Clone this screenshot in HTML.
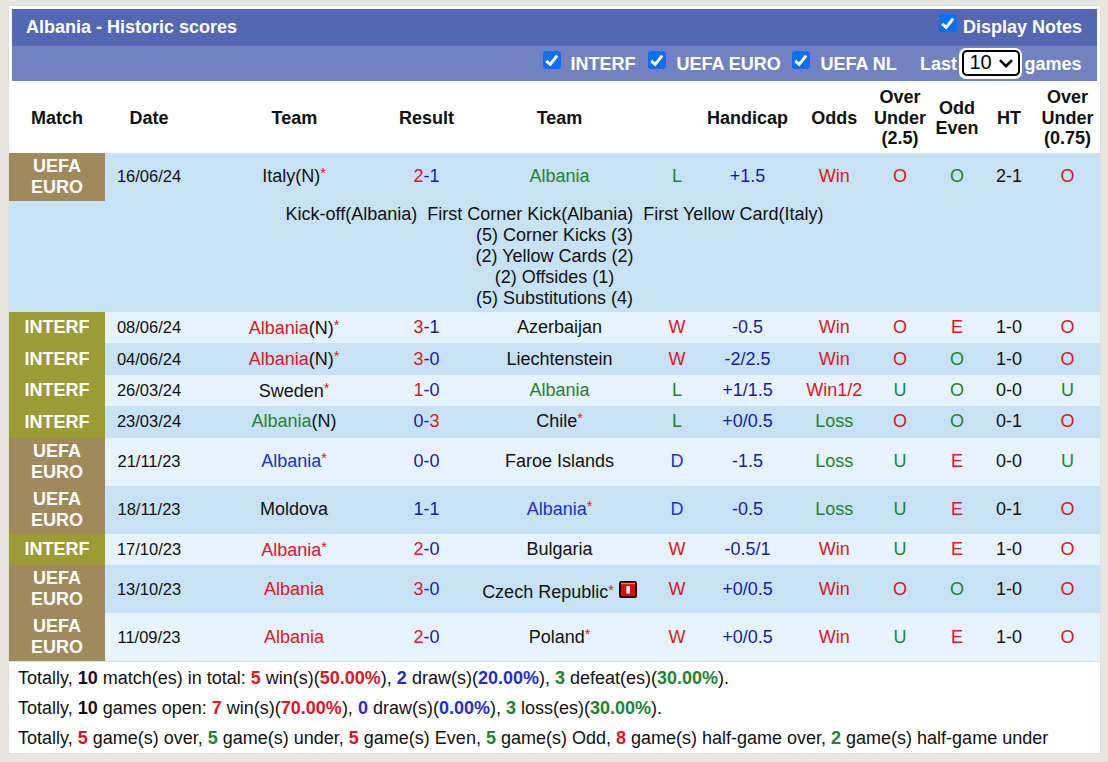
<!DOCTYPE html><html><head><meta charset="utf-8"><style>
*{margin:0;padding:0;box-sizing:border-box}
html,body{width:1108px;height:762px;overflow:hidden;background:#e8e7df;font-family:"Liberation Sans",sans-serif;color:#111111;font-size:18px}
.a{position:absolute}
#wrap{position:absolute;left:8px;top:5px;width:1093px;height:749px;background:#fff;border:1px solid #dedfd6}
#title{position:absolute;left:12px;top:9px;width:1085px;height:37px;background:#5367b4;color:#fff;font-weight:bold}
#filt{position:absolute;left:12px;top:46px;width:1085px;height:35px;background:#7282c0;color:#fff;font-weight:bold}
.row{position:absolute;left:9px;width:1091px}
.light{background:#e6f3fc} .medium{background:#c8e2f5}
.mc{position:absolute;left:0;top:0;width:96px;height:100%;color:#fff;font-weight:bold;display:flex;align-items:center;justify-content:center;text-align:center;line-height:21px}
.euro .mc, .mc.euro{background:#a08a5c} .mc.interf{background:#9c9c36}
.c{position:absolute;top:0;height:100%;width:240px;margin-left:-120px;display:flex;align-items:center;justify-content:center;white-space:nowrap}
.r{color:#dd1524} .g{color:#1e8232} .b{color:#1a1c9c} .bb{color:#1f2ed0}
.dt{font-size:16.5px} .st{font-size:14.5px;vertical-align:3.5px}
.hd{position:absolute;top:82px;height:72px;font-weight:bold;width:120px;margin-left:-60px;text-align:center;display:flex;align-items:center;justify-content:center;line-height:20.5px}
.note{position:absolute;left:9px;top:201px;width:1091px;height:111px;background:#c8e2f5;text-align:center;line-height:21px;padding-top:3px}
.rc{display:inline-block;vertical-align:0;margin-left:0}
.sum{position:absolute;left:18px;white-space:nowrap;line-height:20px}
.sum b{font-weight:bold}
</style></head><body>
<div id="wrap"></div>
<div id="title"><div class="a" style="left:14px;top:8px">Albania - Historic scores</div><svg class="a" width="18" height="18" style="left:927px;top:5px" viewBox="0 0 18 18"><rect x="0" y="0" width="18" height="18" rx="3" fill="#0b6ff5"/><path d="M3.2 9.8 L7.2 13.4 L14.2 4.6" fill="none" stroke="#fff" stroke-width="3"/></svg><div class="a" style="left:951px;top:8px">Display Notes</div></div>
<div id="filt"><svg class="a" width="18" height="18" style="left:531px;top:4.5px" viewBox="0 0 18 18"><rect x="0" y="0" width="18" height="18" rx="3" fill="#0b6ff5"/><path d="M3.2 9.8 L7.2 13.4 L14.2 4.6" fill="none" stroke="#fff" stroke-width="3"/></svg><div class="a" style="left:558.5px;top:8px">INTERF</div><svg class="a" width="18" height="18" style="left:636px;top:4.5px" viewBox="0 0 18 18"><rect x="0" y="0" width="18" height="18" rx="3" fill="#0b6ff5"/><path d="M3.2 9.8 L7.2 13.4 L14.2 4.6" fill="none" stroke="#fff" stroke-width="3"/></svg><div class="a" style="left:664.5px;top:8px">UEFA EURO</div><svg class="a" width="18" height="18" style="left:780px;top:5px" viewBox="0 0 18 18"><rect x="0" y="0" width="18" height="18" rx="3" fill="#0b6ff5"/><path d="M3.2 9.8 L7.2 13.4 L14.2 4.6" fill="none" stroke="#fff" stroke-width="3"/></svg><div class="a" style="left:808.5px;top:8px">UEFA NL</div><div class="a" style="left:908px;top:8px">Last</div><div class="a" style="left:1012.5px;top:8px">games</div><div class="a" style="left:947px;top:1.5px;width:63px;height:31px;background:#fff;border-radius:7px"></div><div class="a" style="left:950px;top:3.7px;width:58px;height:26px;background:#fff;border:2.6px solid #000;border-radius:5px"></div><div class="a" style="left:957.5px;top:5px;font-weight:normal;color:#000;font-size:20px">10</div><svg class="a" style="left:987px;top:13px" width="14" height="9" viewBox="0 0 14 9"><path d="M1 1.2 L7 7.2 L13 1.2" fill="none" stroke="#000" stroke-width="2.6"/></svg></div>
<div class="hd" style="left:57px">Match</div>
<div class="hd" style="left:149px">Date</div>
<div class="hd" style="left:294.4px">Team</div>
<div class="hd" style="left:426.5px">Result</div>
<div class="hd" style="left:559.5px">Team</div>
<div class="hd" style="left:747.5px">Handicap</div>
<div class="hd" style="left:834.3px">Odds</div>
<div class="hd" style="left:900px">Over<br>Under<br>(2.5)</div>
<div class="hd" style="left:957px">Odd<br>Even</div>
<div class="hd" style="left:1009px">HT</div>
<div class="hd" style="left:1067.5px">Over<br>Under<br>(0.75)</div>
<div class="row medium" style="top:153px;height:48px"><div class="mc euro">UEFA<br>EURO</div>
<div class="c" style="left:140px;top:-1px"><span><span class="dt">16/06/24</span></span></div>
<div class="c" style="left:285px;top:-1px"><span>Italy(N)<span class="r st">*</span></span></div>
<div class="c" style="left:417.5px;top:-1px"><span><span class="r">2</span><span class="b">-1</span></span></div>
<div class="c" style="left:550.5px;top:-1px"><span><span class="g">Albania</span></span></div>
<div class="c" style="left:668px;top:-1px"><span><span class="g">L</span></span></div>
<div class="c" style="left:738.5px;top:-1px"><span><span class="b">+1.5</span></span></div>
<div class="c" style="left:825.3px;top:-1px"><span><span class="r">Win</span></span></div>
<div class="c" style="left:891px;top:-1px"><span><span class="r">O</span></span></div>
<div class="c" style="left:948px;top:-1px"><span><span class="g">O</span></span></div>
<div class="c" style="left:1000px;top:-1px"><span>2-1</span></div>
<div class="c" style="left:1058.5px;top:-1px"><span><span class="r">O</span></span></div>
</div>
<div class="note">Kick-off(Albania)&nbsp;&nbsp;First Corner Kick(Albania)&nbsp;&nbsp;First Yellow Card(Italy)<br>(5) Corner Kicks (3)<br>(2) Yellow Cards (2)<br>(2) Offsides (1)<br>(5) Substitutions (4)</div>
<div class="row light" style="top:312px;height:31px"><div class="mc interf">INTERF</div>
<div class="c" style="left:140px;top:0px"><span><span class="dt">08/06/24</span></span></div>
<div class="c" style="left:285px;top:0px"><span><span class="r">Albania</span>(N)<span class="r st">*</span></span></div>
<div class="c" style="left:417.5px;top:0px"><span><span class="r">3</span><span class="b">-1</span></span></div>
<div class="c" style="left:550.5px;top:0px"><span>Azerbaijan</span></div>
<div class="c" style="left:668px;top:0px"><span><span class="r">W</span></span></div>
<div class="c" style="left:738.5px;top:0px"><span><span class="b">-0.5</span></span></div>
<div class="c" style="left:825.3px;top:0px"><span><span class="r">Win</span></span></div>
<div class="c" style="left:891px;top:0px"><span><span class="r">O</span></span></div>
<div class="c" style="left:948px;top:0px"><span><span class="r">E</span></span></div>
<div class="c" style="left:1000px;top:0px"><span>1-0</span></div>
<div class="c" style="left:1058.5px;top:0px"><span><span class="r">O</span></span></div>
</div>
<div class="row medium" style="top:343px;height:32px"><div class="mc interf">INTERF</div>
<div class="c" style="left:140px;top:0px"><span><span class="dt">04/06/24</span></span></div>
<div class="c" style="left:285px;top:0px"><span><span class="r">Albania</span>(N)<span class="r st">*</span></span></div>
<div class="c" style="left:417.5px;top:0px"><span><span class="r">3</span><span class="b">-0</span></span></div>
<div class="c" style="left:550.5px;top:0px"><span>Liechtenstein</span></div>
<div class="c" style="left:668px;top:0px"><span><span class="r">W</span></span></div>
<div class="c" style="left:738.5px;top:0px"><span><span class="b">-2/2.5</span></span></div>
<div class="c" style="left:825.3px;top:0px"><span><span class="r">Win</span></span></div>
<div class="c" style="left:891px;top:0px"><span><span class="r">O</span></span></div>
<div class="c" style="left:948px;top:0px"><span><span class="g">O</span></span></div>
<div class="c" style="left:1000px;top:0px"><span>1-0</span></div>
<div class="c" style="left:1058.5px;top:0px"><span><span class="r">O</span></span></div>
</div>
<div class="row light" style="top:375px;height:31px"><div class="mc interf">INTERF</div>
<div class="c" style="left:140px;top:0px"><span><span class="dt">26/03/24</span></span></div>
<div class="c" style="left:285px;top:0px"><span>Sweden<span class="r st">*</span></span></div>
<div class="c" style="left:417.5px;top:0px"><span><span class="r">1</span><span class="b">-0</span></span></div>
<div class="c" style="left:550.5px;top:0px"><span><span class="g">Albania</span></span></div>
<div class="c" style="left:668px;top:0px"><span><span class="g">L</span></span></div>
<div class="c" style="left:738.5px;top:0px"><span><span class="b">+1/1.5</span></span></div>
<div class="c" style="left:825.3px;top:0px"><span><span class="r">Win1/2</span></span></div>
<div class="c" style="left:891px;top:0px"><span><span class="g">U</span></span></div>
<div class="c" style="left:948px;top:0px"><span><span class="g">O</span></span></div>
<div class="c" style="left:1000px;top:0px"><span>0-0</span></div>
<div class="c" style="left:1058.5px;top:0px"><span><span class="g">U</span></span></div>
</div>
<div class="row medium" style="top:406px;height:32px"><div class="mc interf">INTERF</div>
<div class="c" style="left:140px;top:-1px"><span><span class="dt">23/03/24</span></span></div>
<div class="c" style="left:285px;top:-1px"><span><span class="g">Albania</span>(N)</span></div>
<div class="c" style="left:417.5px;top:-1px"><span><span class="b">0-</span><span class="r">3</span></span></div>
<div class="c" style="left:550.5px;top:-1px"><span>Chile<span class="r st">*</span></span></div>
<div class="c" style="left:668px;top:-1px"><span><span class="g">L</span></span></div>
<div class="c" style="left:738.5px;top:-1px"><span><span class="b">+0/0.5</span></span></div>
<div class="c" style="left:825.3px;top:-1px"><span><span class="g">Loss</span></span></div>
<div class="c" style="left:891px;top:-1px"><span><span class="r">O</span></span></div>
<div class="c" style="left:948px;top:-1px"><span><span class="g">O</span></span></div>
<div class="c" style="left:1000px;top:-1px"><span>0-1</span></div>
<div class="c" style="left:1058.5px;top:-1px"><span><span class="r">O</span></span></div>
</div>
<div class="row light" style="top:438px;height:48px"><div class="mc euro">UEFA<br>EURO</div>
<div class="c" style="left:140px;top:-1px"><span><span class="dt">21/11/23</span></span></div>
<div class="c" style="left:285px;top:-1px"><span><span class="bb">Albania</span><span class="r st">*</span></span></div>
<div class="c" style="left:417.5px;top:-1px"><span><span class="b">0-0</span></span></div>
<div class="c" style="left:550.5px;top:-1px"><span>Faroe Islands</span></div>
<div class="c" style="left:668px;top:-1px"><span><span class="bb">D</span></span></div>
<div class="c" style="left:738.5px;top:-1px"><span><span class="b">-1.5</span></span></div>
<div class="c" style="left:825.3px;top:-1px"><span><span class="g">Loss</span></span></div>
<div class="c" style="left:891px;top:-1px"><span><span class="g">U</span></span></div>
<div class="c" style="left:948px;top:-1px"><span><span class="r">E</span></span></div>
<div class="c" style="left:1000px;top:-1px"><span>0-0</span></div>
<div class="c" style="left:1058.5px;top:-1px"><span><span class="g">U</span></span></div>
</div>
<div class="row medium" style="top:486px;height:48px"><div class="mc euro">UEFA<br>EURO</div>
<div class="c" style="left:140px;top:-1px"><span><span class="dt">18/11/23</span></span></div>
<div class="c" style="left:285px;top:-1px"><span>Moldova</span></div>
<div class="c" style="left:417.5px;top:-1px"><span><span class="b">1-1</span></span></div>
<div class="c" style="left:550.5px;top:-1px"><span><span class="bb">Albania</span><span class="r st">*</span></span></div>
<div class="c" style="left:668px;top:-1px"><span><span class="bb">D</span></span></div>
<div class="c" style="left:738.5px;top:-1px"><span><span class="b">-0.5</span></span></div>
<div class="c" style="left:825.3px;top:-1px"><span><span class="g">Loss</span></span></div>
<div class="c" style="left:891px;top:-1px"><span><span class="g">U</span></span></div>
<div class="c" style="left:948px;top:-1px"><span><span class="r">E</span></span></div>
<div class="c" style="left:1000px;top:-1px"><span>0-1</span></div>
<div class="c" style="left:1058.5px;top:-1px"><span><span class="r">O</span></span></div>
</div>
<div class="row light" style="top:534px;height:31px"><div class="mc interf">INTERF</div>
<div class="c" style="left:140px;top:0px"><span><span class="dt">17/10/23</span></span></div>
<div class="c" style="left:285px;top:0px"><span><span class="r">Albania</span><span class="r st">*</span></span></div>
<div class="c" style="left:417.5px;top:0px"><span><span class="r">2</span><span class="b">-0</span></span></div>
<div class="c" style="left:550.5px;top:0px"><span>Bulgaria</span></div>
<div class="c" style="left:668px;top:0px"><span><span class="r">W</span></span></div>
<div class="c" style="left:738.5px;top:0px"><span><span class="b">-0.5/1</span></span></div>
<div class="c" style="left:825.3px;top:0px"><span><span class="r">Win</span></span></div>
<div class="c" style="left:891px;top:0px"><span><span class="g">U</span></span></div>
<div class="c" style="left:948px;top:0px"><span><span class="r">E</span></span></div>
<div class="c" style="left:1000px;top:0px"><span>1-0</span></div>
<div class="c" style="left:1058.5px;top:0px"><span><span class="r">O</span></span></div>
</div>
<div class="row medium" style="top:565px;height:48px"><div class="mc euro">UEFA<br>EURO</div>
<div class="c" style="left:140px;top:0px"><span><span class="dt">13/10/23</span></span></div>
<div class="c" style="left:285px;top:0px"><span><span class="r">Albania</span></span></div>
<div class="c" style="left:417.5px;top:0px"><span><span class="r">3</span><span class="b">-0</span></span></div>
<div class="c" style="left:550.5px;top:3px"><span>Czech Republic<span class="r st">*</span> <svg class="rc" width="18" height="17" viewBox="0 0 18 17"><rect x="0" y="0" width="18" height="17" rx="2.5" fill="#0a0000"/><rect x="1.8" y="1.8" width="14.4" height="13.4" fill="#dd0a0a"/><rect x="1.8" y="1.8" width="14.4" height="1.4" fill="#f08a10"/><rect x="7.4" y="5" width="3.4" height="7.5" fill="#fff"/></svg></span></div>
<div class="c" style="left:668px;top:0px"><span><span class="r">W</span></span></div>
<div class="c" style="left:738.5px;top:0px"><span><span class="b">+0/0.5</span></span></div>
<div class="c" style="left:825.3px;top:0px"><span><span class="r">Win</span></span></div>
<div class="c" style="left:891px;top:0px"><span><span class="r">O</span></span></div>
<div class="c" style="left:948px;top:0px"><span><span class="g">O</span></span></div>
<div class="c" style="left:1000px;top:0px"><span>1-0</span></div>
<div class="c" style="left:1058.5px;top:0px"><span><span class="r">O</span></span></div>
</div>
<div class="row light" style="top:613px;height:48px"><div class="mc euro">UEFA<br>EURO</div>
<div class="c" style="left:140px;top:0px"><span><span class="dt">11/09/23</span></span></div>
<div class="c" style="left:285px;top:0px"><span><span class="r">Albania</span></span></div>
<div class="c" style="left:417.5px;top:0px"><span><span class="r">2</span><span class="b">-0</span></span></div>
<div class="c" style="left:550.5px;top:0px"><span>Poland<span class="r st">*</span></span></div>
<div class="c" style="left:668px;top:0px"><span><span class="r">W</span></span></div>
<div class="c" style="left:738.5px;top:0px"><span><span class="b">+0/0.5</span></span></div>
<div class="c" style="left:825.3px;top:0px"><span><span class="r">Win</span></span></div>
<div class="c" style="left:891px;top:0px"><span><span class="g">U</span></span></div>
<div class="c" style="left:948px;top:0px"><span><span class="r">E</span></span></div>
<div class="c" style="left:1000px;top:0px"><span>1-0</span></div>
<div class="c" style="left:1058.5px;top:0px"><span><span class="r">O</span></span></div>
</div>
<div class="a" style="left:9px;top:661px;width:1091px;height:1px;background:#d9dee3"></div>
<div class="sum" style="top:668px">Totally, <b>10</b> match(es) in total: <b class="r">5</b> win(s)(<b class="r">50.00%</b>), <b class="bb">2</b> draw(s)(<b class="bb">20.00%</b>), <b class="g">3</b> defeat(es)(<b class="g">30.00%</b>).</div>
<div class="sum" style="top:698px">Totally, <b>10</b> games open: <b class="r">7</b> win(s)(<b class="r">70.00%</b>), <b class="bb">0</b> draw(s)(<b class="bb">0.00%</b>), <b class="g">3</b> loss(es)(<b class="g">30.00%</b>).</div>
<div class="sum" style="top:728px">Totally, <b class="r">5</b> game(s) over, <b class="g">5</b> game(s) under, <b class="r">5</b> game(s) Even, <b class="g">5</b> game(s) Odd, <b class="r">8</b> game(s) half-game over, <b class="g">2</b> game(s) half-game under</div>
</body></html>
